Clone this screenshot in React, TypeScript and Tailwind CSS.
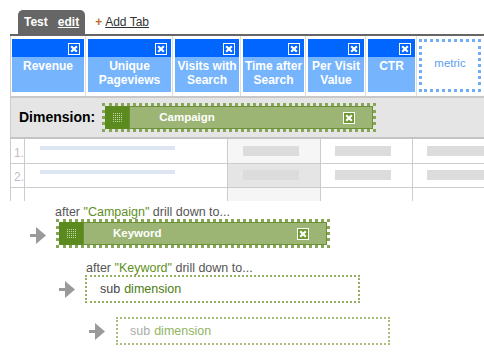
import React from "react";

const XIcon = ({ fill }: { fill: string }) => (
  <svg width="12" height="12" viewBox="0 0 12 12" className="block">
    <rect x="0.5" y="0.5" width="11" height="11" fill={fill} stroke="#fff" strokeWidth="1" />
    <path d="M3.2 3.2 L8.8 8.8 M8.8 3.2 L3.2 8.8" stroke="#fff" strokeWidth="2.2" />
  </svg>
);

const Grip = () => {
  const dots: React.ReactElement[] = [];
  for (let r = 0; r < 5; r++)
    for (let c = 0; c < 5; c++)
      dots.push(<rect key={`${r}-${c}`} x={c * 2} y={r * 2} width="1" height="1" fill="#c6d9a4" />);
  return (
    <svg width="9" height="9" viewBox="0 0 9 9" className="block">
      {dots}
    </svg>
  );
};

const Arrow = () => (
  <svg width="16" height="17" viewBox="0 0 16 17" className="block shrink-0">
    <rect x="0" y="7" width="8" height="3" fill="#9a9a9a" />
    <path d="M6 0 L16 8.5 L6 17 Z" fill="#9a9a9a" />
  </svg>
);

const Pill = ({ label }: { label: string }) => (
  <div className="w-[274px] h-[29px] border-[3px] border-dotted border-[#86a556] flex">
    <div className="w-[24px] bg-[#5b8b1f] flex items-center justify-center">
      <Grip />
    </div>
    <div className="flex-1 flex items-center border border-[#6c9134] bg-[#9db574]">
      <div className="flex-1 pl-[29px] text-white font-bold text-[11.5px]">{label}</div>
      <div className="pr-[17px]">
        <XIcon fill="#6d9a33" />
      </div>
    </div>
  </div>
);

const MetricCard = ({ label, w }: { label: React.ReactNode; w: string }) => (
  <div className={`${w} h-[53px] flex flex-col`}>
    <div className="h-[18px] bg-[#0066ff] flex items-start justify-end pt-[4px] pr-[4px]">
      <XIcon fill="#0066ff" />
    </div>
    <div className="flex-1 bg-[#76b5fd] text-white font-bold text-[12px] leading-[14px] text-center pt-[2px] whitespace-nowrap">
      {label}
    </div>
  </div>
);

const Cell = ({ children, first }: { children: React.ReactNode; first?: boolean }) => (
  <div className={`${first ? "pl-[1px]" : "pl-[2px]"} pr-[1px] pt-[3px] border-r border-[#dddddd]`}>{children}</div>
);

const TableRow = ({ n, h, top, bg, hideBars }: { n?: string; h: string; top: string; bg: string; hideBars?: boolean }) => (
  <div className={`flex ${h} ${hideBars ? "" : "border-b border-[#cccccc]"}`}>
    <div className="w-[14px] border-r border-[#cccccc] flex items-end justify-end pb-[4px] text-[12px] leading-[12px] text-[#c9b9c9]">
      {n}
    </div>
    <div className="w-[203px] border-r border-[#cccccc]">
      {!hideBars && <div className={`ml-[15px] ${top} w-[135px] h-[4px] bg-[#dde5f2]`} />}
    </div>
    <div className={`w-[93px] border-r border-[#cccccc] ${bg}`}>
      {!hideBars && <div className={`ml-[15px] ${top} w-[56px] h-[10px] bg-[#dcdcdc]`} />}
    </div>
    <div className="w-[92px] border-r border-[#cccccc]">
      {!hideBars && <div className={`ml-[14px] ${top} w-[56px] h-[10px] bg-[#dcdcdc]`} />}
    </div>
    <div className="flex-1">
      {!hideBars && <div className={`ml-[14px] ${top} w-[57px] h-[10px] bg-[#dcdcdc]`} />}
    </div>
  </div>
);

export default function App() {
  return (
    <div className="w-[484px] h-[353px] overflow-hidden bg-white font-['Liberation_Sans',Arial,sans-serif]">
      {/* Tabs */}
      <div className="h-[34px] flex items-end pl-[18px]">
        <div className="h-[24px] px-[6px] rounded-t-[5px] bg-[#666666] flex items-center gap-[10px] text-white font-bold text-[12px]">
          <span>Test</span>
          <span className="underline">edit</span>
        </div>
        <div className="h-[24px] ml-[10px] flex items-center text-[12px] text-[#333333]">
          <span className="text-[#c0692a] font-bold">+</span>
          <span className="ml-[3px] underline">Add Tab</span>
        </div>
      </div>
      <div className="ml-[10px] h-[2px] bg-[#666666]" />

      {/* Metrics */}
      <div className="ml-[10px] h-[62px] border-l border-[#cccccc] border-b-2 border-b-[#c8c8c8] flex">
        <Cell first>
          <MetricCard w="w-[72px]" label="Revenue" />
        </Cell>
        <Cell>
          <MetricCard w="w-[83px]" label={<>Unique<br />Pageviews</>} />
        </Cell>
        <Cell>
          <MetricCard w="w-[64px]" label={<>Visits with<br />Search</>} />
        </Cell>
        <Cell>
          <MetricCard w="w-[61px]" label={<>Time after<br />Search</>} />
        </Cell>
        <Cell>
          <MetricCard w="w-[56px]" label={<>Per Visit<br />Value</>} />
        </Cell>
        <Cell>
          <MetricCard w="w-[47px]" label="CTR" />
        </Cell>
        <div className="pl-[2px] pt-[3px]">
          <div className="w-[62px] h-[53px] border-[3px] border-dotted border-[#70adf7] flex items-center justify-center pb-[4px] text-[#5c9ef0] text-[11.5px]">
            metric
          </div>
        </div>
      </div>

      {/* Dimension */}
      <div className="ml-[10px] h-[41px] border-l border-[#cccccc] border-b-2 border-b-[#c4c4c4] bg-[#e5e5e5] flex items-center pl-[8px]">
        <span className="text-[14px] font-bold text-black">Dimension:</span>
        <div className="ml-[7px]">
          <Pill label="Campaign" />
        </div>
      </div>

      {/* Table */}
      <div className="ml-[10px] h-[62px] border-l border-[#cccccc] overflow-hidden">
        <TableRow n="1." h="h-[25px]" top="mt-[7px]" bg="bg-[#f6f6f6]" />
        <TableRow n="2." h="h-[24px]" top="mt-[6px]" bg="bg-[#e5e5e5]" />
        <TableRow h="h-[13px]" top="mt-[6px]" bg="bg-[#f6f6f6]" hideBars />
      </div>

      {/* Drill down */}
      <div className="flex flex-col">
        <div className="pl-[55px] mt-[4px] text-[12.5px] leading-[14px] text-[#555555]">
          after <span className="text-[#5e8f1c]">"Campaign"</span> drill down to...
        </div>
        <div className="flex items-center pl-[30px]">
          <div className="mt-[3px]">
            <Arrow />
          </div>
          <div className="ml-[10px]">
            <Pill label="Keyword" />
          </div>
        </div>

        <div className="pl-[86px] mt-[14px] text-[12.5px] leading-[12px] text-[#555555]">
          after <span className="text-[#5e8f1c]">"Keyword"</span> drill down to...
        </div>
        <div className="flex items-center pl-[59px] mt-[1px]">
          <Arrow />
          <div className="ml-[10px] w-[275px] h-[28px] border-2 border-dotted border-[#93ad63] flex items-center pl-[13px] text-[12.5px]">
            <span className="text-[#444444]">sub</span>
            <span className="ml-[4px] text-[#4d7c12]">dimension</span>
          </div>
        </div>

        <div className="flex items-center pl-[89px] mt-[14px]">
          <Arrow />
          <div className="ml-[11px] w-[274px] h-[28px] border-2 border-dotted border-[#a6bd7c] flex items-center pl-[12px] text-[12.5px]">
            <span className="text-[#aaaaaa]">sub</span>
            <span className="ml-[4px] text-[#93b463]">dimension</span>
          </div>
        </div>
      </div>
    </div>
  );
}
